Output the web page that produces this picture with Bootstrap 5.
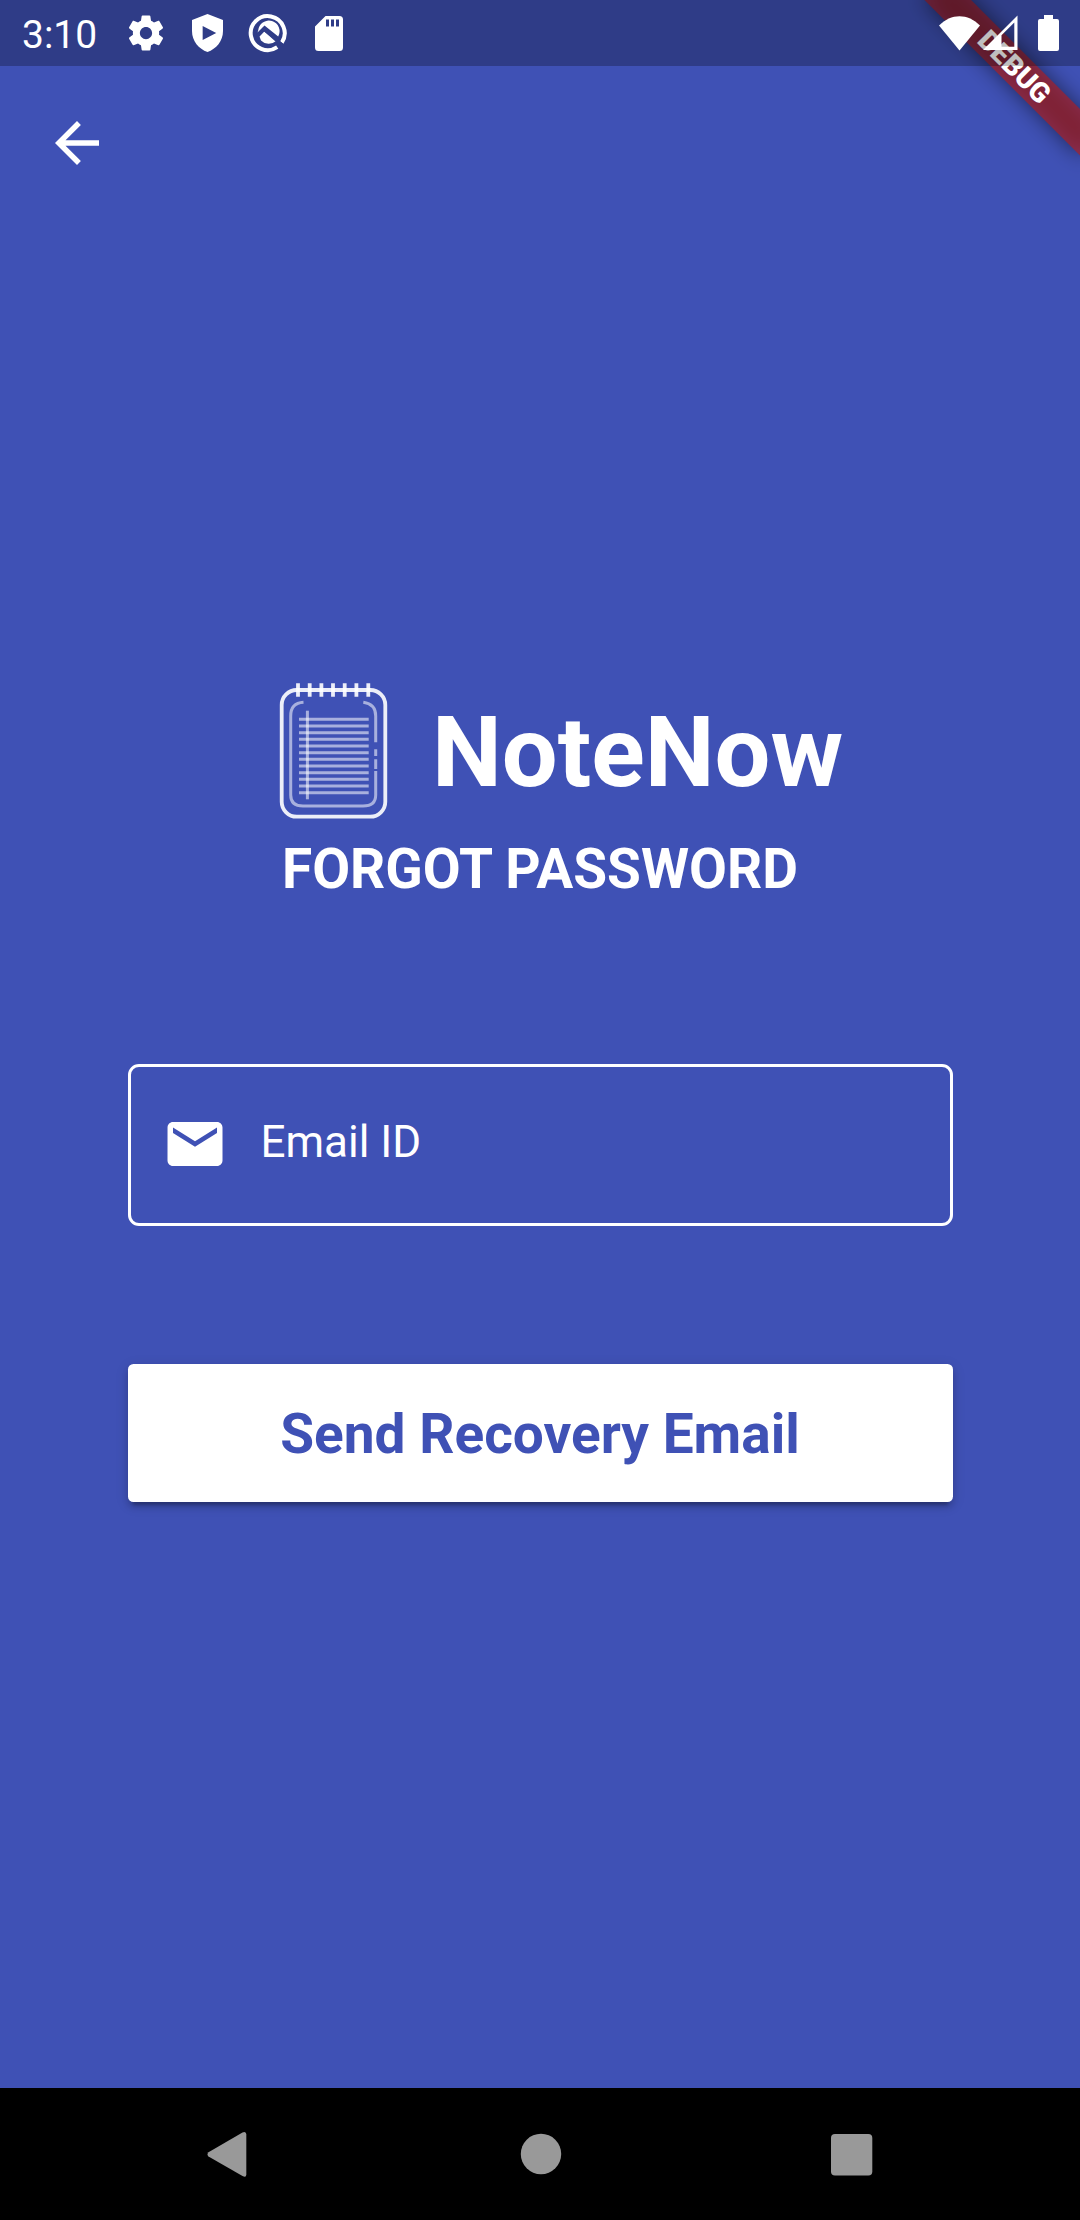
<!DOCTYPE html>
<html lang="en">
<head>
<meta charset="utf-8">
<meta name="viewport" content="width=device-width, initial-scale=1">
<title>NoteNow</title>
<link href="https://cdn.jsdelivr.net/npm/bootstrap@5.3.0/dist/css/bootstrap.min.css" rel="stylesheet">
<style>
  body { background: #3f51b5; font-family: Roboto, "Liberation Sans", sans-serif; width: 1080px; height: 2220px; }
  svg { display: block; flex: none; }
  .status-bar { height: 66px; background: rgba(0,0,0,.25); padding: 0 21px 0 22px; z-index: 2; }
  .clock { font-size: 39px; line-height: 66px; width: 98px; padding-top: 3px; }
  .ic-gear { margin-left: 5px; }
  .ic-shield { margin-left: 25px; }
  .ic-round { margin-left: 25px; }
  .ic-sd { margin-left: 27px; }
  .ic-signal { margin-left: 3px; }
  .ic-battery { margin-left: 20px; }
  .debug-ribbon { top: 0; right: 0; z-index: 1; pointer-events: none; }
  .debug-ribbon text { font: 900 28.05px Roboto, sans-serif; fill: #fff; text-anchor: middle; }
  .top-bar { height: 154px; padding: 44px 44px; }
  .brand-row { margin-left: 275px; margin-top: 460px; height: 144px; }
  .brand-name { font-size: 99px; line-height: 116px; font-weight: 700; margin-left: 39px; }
  .page-title { font-size: 55px; line-height: 64px; font-weight: 700; margin-top: 13px; }
  .form-area { width: 825px; margin-top: 163px; }
  .mail-field { height: 162px; border: 3px solid #fff; border-radius: 11px; padding: 0 0 2px 31px; }
  .mail-field .form-control, .mail-field .form-control::placeholder { color: #fff; opacity: 1; }
  .mail-field .form-control { font-size: 44px; line-height: 52px; padding: 0 0 4px 0; margin-left: 33px; }
  .send-btn { margin-top: 138px; height: 138px; border-radius: 5.5px; border: 0; background: #fff; color: #3f51b5;
    font-size: 55px; line-height: 64px; font-weight: 700; padding-top: 8px;
    box-shadow: 0 8px 3px -5px rgba(0,0,0,.2), 0 5px 6px rgba(0,0,0,.14), 0 3px 14px rgba(0,0,0,.12); }
  .system-nav { height: 132px; background: #000; }
</style>
</head>
<body class="d-flex flex-column position-relative overflow-hidden text-white m-0">

<svg class="debug-ribbon position-absolute" width="220" height="220" viewBox="860 0 220 220">
  <defs><filter id="soft" filterUnits="userSpaceOnUse" x="-200" y="20" width="400" height="150"><feGaussianBlur stdDeviation="10.9"/></filter></defs>
  <g transform="translate(1080 0) rotate(45)">
    <rect x="-110" y="77" width="220" height="33" fill="#000" fill-opacity=".5" filter="url(#soft)"/>
    <rect x="-110" y="77" width="220" height="33" fill="#b71c1c" fill-opacity=".627"/>
    <text x="1" y="103.300">DEBUG</text>
  </g>
</svg>

<header class="status-bar d-flex align-items-center position-relative">
  <div class="clock">3:10</div>
  <svg class="ic-gear" width="42" height="42" viewBox="0 0 24 24" fill="#fff"><path d="M19.430 12.980c.04-.32.07-.64.07-.98s-.03-.66-.07-.98l2.110-1.650c.19-.15.24-.42.12-.64l-2-3.460c-.12-.22-.39-.3-.61-.22l-2.490 1c-.52-.4-1.080-.73-1.690-.98l-.38-2.650C14.460 2.180 14.250 2 14 2h-4c-.25 0-.46.18-.49.42l-.38 2.650c-.61.25-1.170.59-1.690.98l-2.490-1c-.23-.09-.49 0-.61.22l-2 3.460c-.13.22-.07.49.12.64l2.110 1.650c-.04.32-.07.65-.07.98s.03.66.07.98l-2.110 1.650c-.19.15-.24.42-.12.64l2 3.460c.12.22.39.3.61.22l2.490-1c.52.4 1.080.73 1.690.98l.38 2.650c.03.24.24.42.49.42h4c.25 0 .46-.18.49-.42l.38-2.650c.61-.25 1.170-.59 1.690-.98l2.490 1c.23.09.49 0 .61-.22l2-3.460c.12-.22.07-.49-.12-.64l-2.110-1.650zM12 15.500c-1.930 0-3.500-1.570-3.500-3.500s1.570-3.500 3.500-3.500 3.500 1.570 3.500 3.500-1.570 3.500-3.500 3.500z"/></svg>
  <svg class="ic-shield" width="31" height="38" viewBox="0 0 32 38" fill="#fff" preserveAspectRatio="none"><path fill-rule="evenodd" d="M16 0 32 6V17C32 27 25 35 16 38 7 35 0 27 0 17V6ZM11 12V26L25 19Z"/></svg>
  <svg class="ic-round" width="40" height="40" viewBox="0 0 40 40">
    <path d="M29.200 34.200A17 17 0 1 1 33.800 29.600" fill="none" stroke="#fff" stroke-width="4"/>
    <path d="M10.200 17.500A10.700 10.700 0 1 1 30.200 23.500L16.500 12.500 9.500 19.500Z" fill="#fff"/>
    <path d="M16.200 18.500 28 28A10.700 10.700 0 0 1 13 27.500L11.500 23.500Z" fill="#fff"/>
    <path d="M9.500 22.500 16 16 34 32" fill="none" stroke="#303d88" stroke-width="3.400"/>
  </svg>
  <svg class="ic-sd" width="28" height="35" viewBox="0 0 28 35" fill="#fff"><path fill-rule="evenodd" d="M10.500 0H24.500Q28 0 28 3.500V31.500Q28 35 24.500 35H3.500Q0 35 0 31.500V10.500ZM11 3.500V10.500H14V3.500ZM16 3.500V10.500H19V3.500ZM21 3.500V10.500H24V3.500Z"/></svg>
  <div class="d-flex align-items-center ms-auto">
    <svg width="41" height="35" viewBox="0 0 41 35" fill="#fff"><path d="M20.500 34.500 0 9.500C12-3 29-3 41 9.500Z"/></svg>
    <svg class="ic-signal" width="35" height="36" viewBox="0 0 35 36" fill="#fff"><path fill-rule="evenodd" d="M0 35 34.500 .5V35ZM18.500 20.300V31.800H31.300V7.500Z"/></svg>
    <svg class="ic-battery" width="21" height="36" viewBox="0 0 21 36" fill="#fff"><path d="M6 0H15V4H19Q21 4 21 6V34Q21 36 19 36H2Q0 36 0 34V6Q0 4 2 4H6Z"/></svg>
  </div>
</header>

<nav class="top-bar">
  <svg width="66" height="66" viewBox="0 0 24 24" fill="#fff" role="img" aria-label="Back"><path d="M20 11H7.830l5.590-5.590L12 4l-8 8 8 8 1.410-1.410L7.830 13H20v-2z"/></svg>
</nav>

<main class="flex-grow-1 d-flex flex-column align-items-center">
  <div class="brand-row d-flex align-items-center align-self-start">
    <svg width="118" height="144" viewBox="0 0 118 144" fill="none" stroke="#fff">
      <rect x="6.700" y="10" width="103.600" height="126.700" rx="15" stroke-width="3.800" stroke-opacity=".9"/>
      <path stroke-width="3.800" stroke-opacity=".9" d="M23 3.300V16.700M34.700 3.300V16.700M46.400 3.300V16.700M58 3.300V16.700M69.700 3.300V16.700M81.400 3.300V16.700M93.300 3.300V16.700"/>
      <g stroke-width="3" stroke-opacity=".55">
        <path d="M28.500 22.300Q15.700 23 15.700 36V115Q15.700 126 28 126H88Q100.700 126 100.700 115V91M88.300 22.300Q100.700 24 100.700 36V62.300M100.700 69.300V76M100.700 79.300V89"/>
        <path d="M24 39.300H93.700M24 46H93.700M24 52.700H93.700M24 59.300H93.700M24 66H93.700M24 72.700H93.700M24 79.300H93.700M24 86H93.700M24 92.700H93.700M24 99.300H93.700M24 106H93.700M24 112.700H93.700"/>
        <path d="M32.400 30.700V119.300"/>
      </g>
    </svg>
    <div class="brand-name">NoteNow</div>
  </div>
  <h1 class="page-title mb-0">FORGOT PASSWORD</h1>

  <form class="form-area d-flex flex-column">
    <div class="mail-field d-flex align-items-center">
      <svg width="66" height="66" viewBox="0 0 24 24" fill="#fff"><path d="M20 4H4c-1.100 0-1.990.9-1.990 2L2 18c0 1.100.9 2 2 2h16c1.100 0 2-.9 2-2V6c0-1.100-.9-2-2-2zm0 4l-8 5-8-5V6l8 5 8-5v2z"/></svg>
      <input type="email" class="form-control border-0 bg-transparent shadow-none" placeholder="Email ID" aria-label="Email ID">
    </div>
    <button type="button" class="btn send-btn">Send Recovery Email</button>
  </form>
</main>

<footer class="system-nav d-flex align-items-center justify-content-center">
  <svg width="666" height="46" viewBox="206 2131 666 46" fill="#999">
    <path d="M207.500 2152.300 241.500 2132.400Q245.300 2131 245.300 2134.500V2174.500Q245.300 2178 241.500 2176.100L207.500 2156.500Q205.500 2154.400 207.500 2152.300Z"/>
    <circle cx="540" cy="2154" r="20.200"/>
    <rect x="830" y="2134" width="41.300" height="41.500" rx="4"/>
  </svg>
</footer>

<script src="https://cdn.jsdelivr.net/npm/bootstrap@5.3.0/dist/js/bootstrap.bundle.min.js"></script>
</body>
</html>
